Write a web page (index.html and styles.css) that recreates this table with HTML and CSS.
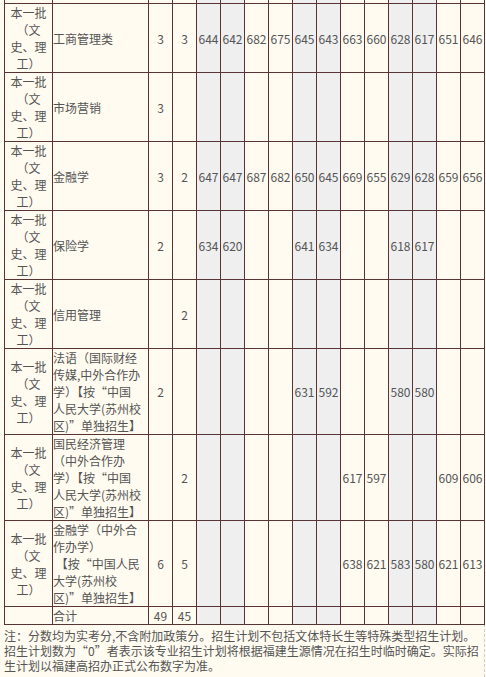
FILE: index.html
```html
<!DOCTYPE html>
<html lang="zh-CN">
<head>
<meta charset="utf-8">
<title>招生计划</title>
<link rel="stylesheet" href="styles.css">
</head>
<body>
<div class="page">
<table class="plan">
<colgroup>
<col class="c-batch"><col class="c-major"><col class="c-num"><col class="c-num">
<col class="c-score shade"><col class="c-score shade"><col class="c-score"><col class="c-score">
<col class="c-score shade"><col class="c-score shade"><col class="c-score"><col class="c-score">
<col class="c-score shade"><col class="c-score shade"><col class="c-score"><col class="c-score">
</colgroup>
<tbody>
<tr class="stub"><td></td><td></td><td></td><td></td><td></td><td></td><td></td><td></td><td></td><td></td><td></td><td></td><td></td><td></td><td></td><td></td></tr>
<tr>
<td class="batch">本一批<br>（文<br>史、理<br>工）</td><td class="major">工商管理类</td><td>3</td><td>3</td>
<td>644</td><td>642</td><td>682</td><td>675</td><td>645</td><td>643</td><td>663</td><td>660</td><td>628</td><td>617</td><td>651</td><td>646</td>
</tr>
<tr>
<td class="batch">本一批<br>（文<br>史、理<br>工）</td><td class="major">市场营销</td><td>3</td><td></td>
<td></td><td></td><td></td><td></td><td></td><td></td><td></td><td></td><td></td><td></td><td></td><td></td>
</tr>
<tr>
<td class="batch">本一批<br>（文<br>史、理<br>工）</td><td class="major">金融学</td><td>3</td><td>2</td>
<td>647</td><td>647</td><td>687</td><td>682</td><td>650</td><td>645</td><td>669</td><td>655</td><td>629</td><td>628</td><td>659</td><td>656</td>
</tr>
<tr>
<td class="batch">本一批<br>（文<br>史、理<br>工）</td><td class="major">保险学</td><td>2</td><td></td>
<td>634</td><td>620</td><td></td><td></td><td>641</td><td>634</td><td></td><td></td><td>618</td><td>617</td><td></td><td></td>
</tr>
<tr>
<td class="batch">本一批<br>（文<br>史、理<br>工）</td><td class="major">信用管理</td><td></td><td>2</td>
<td></td><td></td><td></td><td></td><td></td><td></td><td></td><td></td><td></td><td></td><td></td><td></td>
</tr>
<tr>
<td class="batch">本一批<br>（文<br>史、理<br>工）</td><td class="major">法语（国际财经<br>传媒,中外合作办<br>学）【按“中国<br>人民大学(苏州校<br>区)”单独招生】</td><td>2</td><td></td>
<td></td><td></td><td></td><td></td><td>631</td><td>592</td><td></td><td></td><td>580</td><td>580</td><td></td><td></td>
</tr>
<tr>
<td class="batch">本一批<br>（文<br>史、理<br>工）</td><td class="major">国民经济管理<br>（中外合作办<br>学）【按“中国<br>人民大学(苏州校<br>区)”单独招生】</td><td></td><td>2</td>
<td></td><td></td><td></td><td></td><td></td><td></td><td>617</td><td>597</td><td></td><td></td><td>609</td><td>606</td>
</tr>
<tr>
<td class="batch">本一批<br>（文<br>史、理<br>工）</td><td class="major">金融学（中外合<br>作办学）<br>&nbsp;【按“中国人民<br>大学(苏州校<br>区)”单独招生】</td><td>6</td><td>5</td>
<td></td><td></td><td></td><td></td><td></td><td></td><td>638</td><td>621</td><td>583</td><td>580</td><td>621</td><td>613</td>
</tr>
<tr class="total">
<td></td><td class="major">合计</td><td>49</td><td>45</td>
<td></td><td></td><td></td><td></td><td></td><td></td><td></td><td></td><td></td><td></td><td></td><td></td>
</tr>
</tbody>
</table>
<p class="note">注：分数均为实考分,不含附加政策分。招生计划不包括文体特长生等特殊类型招生计划。<br>招生计划数为“0”者表示该专业招生计划将根据福建生源情况在招生时临时确定。实际招<br>生计划以福建高招办正式公布数字为准。</p>
</div>
</body>
</html>
```

FILE: styles.css
```css
html, body {
  margin: 0;
  padding: 0;
  background: #fffbf0;
}

body {
  font-family: "Noto Sans CJK SC", "Noto Sans", sans-serif;
  font-size: 12px;
  color: #555555;
}

.page {
  box-sizing: border-box;
  width: 485px;
  min-height: 100vh;
  padding-left: 4px;
  border-right: 1px dashed #cccccc;
}

.plan {
  border-collapse: collapse;
  table-layout: fixed;
  width: 481px;
}

.c-batch { width: 48px; }
.c-major { width: 96px; }
.c-num { width: 24px; }
.c-score { width: 24px; }
.shade { background: #efefef; }

.plan td {
  border: 1px solid #5a3434;
  padding: 0;
  line-height: 17px;
  text-align: center;
  vertical-align: middle;
  white-space: nowrap;
}

.plan td.major {
  text-align: left;
}

.plan .stub td {
  border-top: none;
  height: 3px;
}

.note {
  margin: 3px 0 0;
  line-height: 15px;
  white-space: nowrap;
}
```
